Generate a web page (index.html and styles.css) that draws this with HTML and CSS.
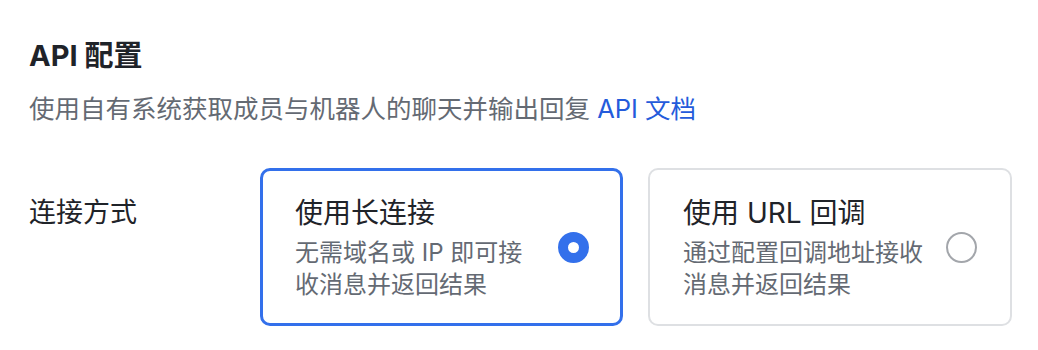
FILE: index.html
```html
<!DOCTYPE html>
<html lang="zh-Hans">
<head>
  <meta charset="UTF-8">
  <meta name="viewport" content="width=device-width, initial-scale=1.0">
  <title>API 配置</title>
  <link rel="stylesheet" href="styles.css">
</head>
<body>
  <div class="container">
    <h2 class="section-title">API 配置</h2>
    <p class="section-desc">使用自有系统获取成员与机器人的聊天并输出回复 <a href="#" class="doc-link">API 文档</a></p>

    <div class="form-row">
      <div class="form-label">连接方式</div>
      <div class="option-group">
        <div class="option-card selected">
          <div class="option-text">
            <div class="option-title">使用长连接</div>
            <div class="option-desc">无需域名或 IP 即可接收消息并返回结果</div>
          </div>
          <span class="radio"></span>
        </div>
        <div class="option-card">
          <div class="option-text">
            <div class="option-title">使用 URL 回调</div>
            <div class="option-desc">通过配置回调地址接收消息并返回结果</div>
          </div>
          <span class="radio"></span>
        </div>
      </div>
    </div>
  </div>
</body>
</html>
```

FILE: styles.css
```css
* {
    margin: 0;
    padding: 0;
    box-sizing: border-box;
}

:root {
    --text-color: #1f2329;
    --text-secondary: #646a73;
    --link-color: #245bdb;
    --primary: #3370eb;
    --border-color: #dee0e3;
    --radio-border: #a3a6ab;
}

body {
    font-family: Inter, "Noto Sans CJK SC", sans-serif;
    background: #ffffff;
    color: var(--text-color);
}

.container {
    padding: 36px 0 0 29px;
}

.section-title {
    font-size: 29px;
    font-weight: 700;
    line-height: 40px;
}

.section-desc {
    margin-top: 15px;
    font-size: 25.5px;
    line-height: 36px;
    color: var(--text-secondary);
}

.doc-link {
    color: var(--link-color);
    text-decoration: none;
}

.form-row {
    display: flex;
    margin-top: 41px;
}

.form-label {
    width: 231px;
    padding-top: 25px;
    font-size: 27px;
    line-height: 40px;
}

.option-group {
    display: flex;
    gap: 25px;
}

.option-card {
    display: flex;
    align-items: center;
    border: 2px solid var(--border-color);
    border-radius: 10px;
    padding: 23px 33px 23px 33px;
    background: #ffffff;
}

.option-card.selected {
    border: 3px solid var(--primary);
    padding: 22px 31px 22px 32px;
}

.option-text {
    width: 244px;
}

.option-title {
    font-size: 28px;
    line-height: 40px;
}

.option-desc {
    margin-top: 4px;
    font-size: 24px;
    line-height: 32px;
    color: var(--text-secondary);
}

.radio {
    flex: 0 0 auto;
    width: 31px;
    height: 31px;
    margin-left: 19px;
    border-radius: 50%;
    border: 2px solid var(--radio-border);
    background: #ffffff;
}

.selected .radio {
    border: 10px solid var(--primary);
}
```
